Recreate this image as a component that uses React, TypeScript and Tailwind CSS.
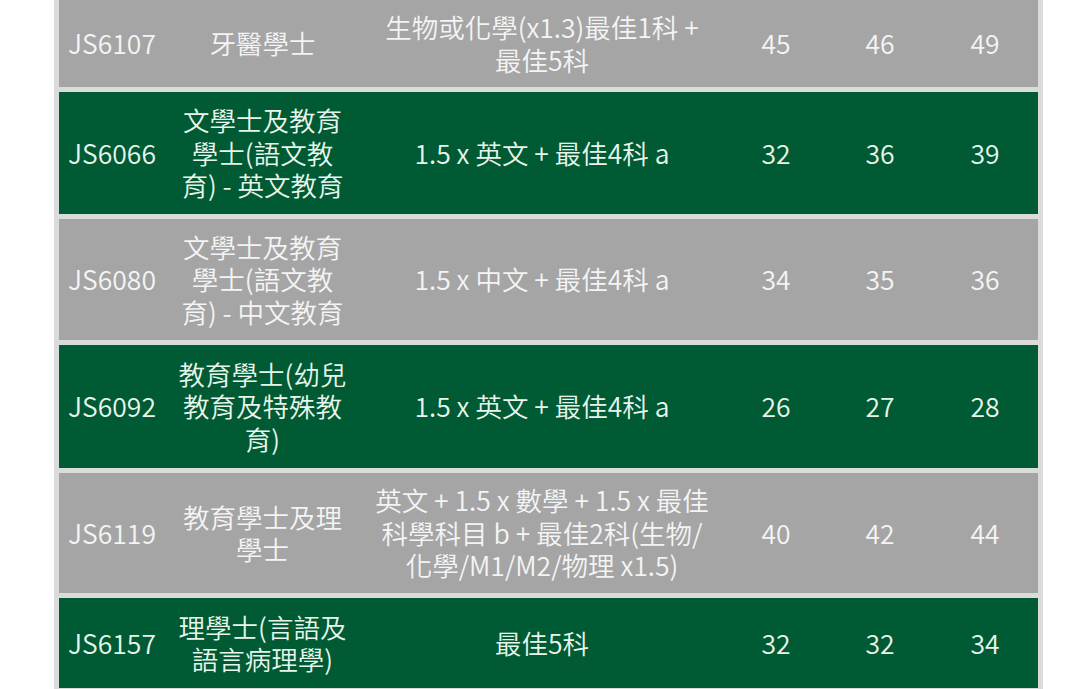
const rows = [
  {
    code: "JS6107",
    name: ["牙醫學士"],
    req: ["生物或化學(x1.3)最佳1科 +", "最佳5科"],
    scores: ["45", "46", "49"],
    tone: "gray",
    h: "h-[87px]",
  },
  {
    code: "JS6066",
    name: ["文學士及教育", "學士(語文教", "育) - 英文教育"],
    req: ["1.5 x 英文 + 最佳4科 a"],
    scores: ["32", "36", "39"],
    tone: "green",
    h: "h-[122px]",
  },
  {
    code: "JS6080",
    name: ["文學士及教育", "學士(語文教", "育) - 中文教育"],
    req: ["1.5 x 中文 + 最佳4科 a"],
    scores: ["34", "35", "36"],
    tone: "gray",
    h: "h-[121px]",
  },
  {
    code: "JS6092",
    name: ["教育學士(幼兒", "教育及特殊教", "育)"],
    req: ["1.5 x 英文 + 最佳4科 a"],
    scores: ["26", "27", "28"],
    tone: "green",
    h: "h-[123px]",
  },
  {
    code: "JS6119",
    name: ["教育學士及理", "學士"],
    req: ["英文 + 1.5 x 數學 + 1.5 x 最佳", "科學科目 b + 最佳2科(生物/", "化學/M1/M2/物理 x1.5)"],
    scores: ["40", "42", "44"],
    tone: "gray",
    h: "h-[120px]",
  },
  {
    code: "JS6157",
    name: ["理學士(言語及", "語言病理學)"],
    req: ["最佳5科"],
    scores: ["32", "32", "34"],
    tone: "green",
    h: "h-[90px]",
  },
];

function Lines({ lines }: { lines: string[] }) {
  return (
    <div className="text-center">
      {lines.map((l, i) => (
        <div key={i} className="whitespace-nowrap">
          {l}
        </div>
      ))}
    </div>
  );
}

export default function App() {
  return (
    <div className="h-[689px] w-[1080px] overflow-hidden bg-white">
      <div
        className="ml-[54px] w-[989px] bg-[#d9dcda] px-[5px] pb-[5px] text-[26.5px] font-[350] leading-[32.5px]"
        style={{ fontFamily: '"Noto Sans CJK TC", "Noto Sans", sans-serif' }}
      >
        <div className="flex flex-col gap-[5px]">
          {rows.map((r) => (
            <div
              key={r.code}
              className={`flex items-center ${r.h} ${
                r.tone === "gray"
                  ? "bg-[#a5a5a5] text-[#f4f4f4]"
                  : "bg-[#005a33] text-[#e8f5ec]"
              }`}
            >
              <div className="flex w-[106px] justify-center">{r.code}</div>
              <div className="flex w-[195px] justify-center">
                <Lines lines={r.name} />
              </div>
              <div className="flex w-[364px] justify-center">
                <Lines lines={r.req} />
              </div>
              {r.scores.map((s, i) => (
                <div
                  key={i}
                  className={`flex justify-center ${i === 2 ? "w-[106px]" : "w-[104px]"}`}
                >
                  {s}
                </div>
              ))}
            </div>
          ))}
        </div>
      </div>
    </div>
  );
}
